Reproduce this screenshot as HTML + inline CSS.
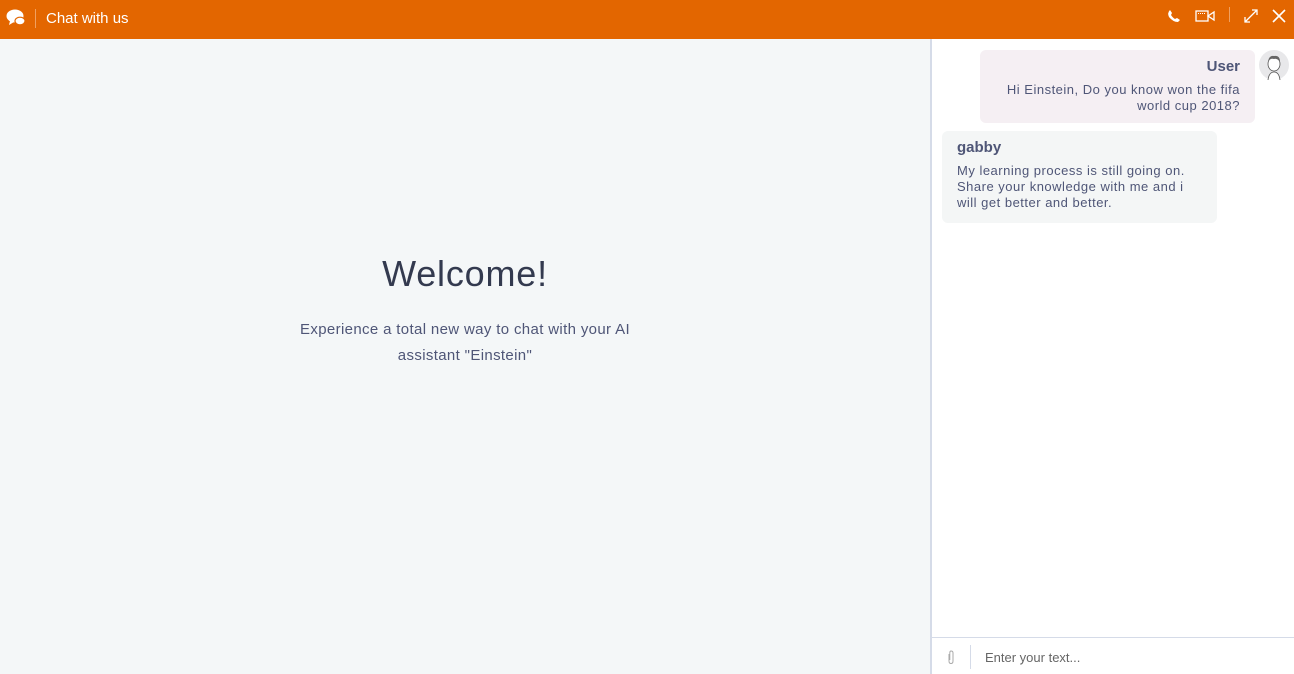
<!DOCTYPE html>
<html><head><meta charset="utf-8"><style>
*{margin:0;padding:0;box-sizing:border-box}
body{width:1294px;height:674px;overflow:hidden;font-family:"Liberation Sans",sans-serif;background:#fff;position:relative}
.top{position:absolute;left:0;top:0;width:1294px;height:39px;background:#e36600;color:#fff}
.left{position:absolute;left:0;top:39px;width:930px;height:635px;background:#f4f7f8}
.div{position:absolute;left:930px;top:39px;width:2px;height:635px;background:#d5dbe8}
.right{position:absolute;left:932px;top:39px;width:362px;height:635px;background:#fff}
.bub{position:absolute;border-radius:6px;color:#4f5677;font-size:13px;line-height:16px;letter-spacing:0.5px}
.bub b{display:block;font-size:15px;letter-spacing:0;margin-bottom:7px}
</style></head><body>
<div class="top">
<svg style="position:absolute;left:6px;top:9px" width="20" height="18" viewBox="0 0 20 18"><ellipse cx="9" cy="7" rx="8.5" ry="6.5" fill="#fff"/><path d="M4 12 L3 16 L8 13Z" fill="#fff"/><ellipse cx="14" cy="12" rx="5" ry="3.8" fill="#fff" stroke="#e36600" stroke-width="1.2"/></svg>
<div style="position:absolute;left:35px;top:9px;width:1px;height:19px;background:#f0a060"></div>
<div style="position:absolute;left:46px;top:10px;font-size:15px">Chat with us</div>
<svg style="position:absolute;left:1167px;top:9px" width="14" height="14" viewBox="0 0 14 14"><path d="M3 1 L5 4 L4 6 Q6 9 8 10 L10 9 L13 11 L11 13 Q6 13 2 8 Q0 4 3 1Z" fill="#fff"/></svg>
<svg style="position:absolute;left:1195px;top:10px" width="20" height="12" viewBox="0 0 20 12"><rect x="1" y="1" width="12" height="10" fill="none" stroke="#fff" stroke-width="1.3"/><line x1="3" y1="3.5" x2="11" y2="3.5" stroke="#fff" stroke-dasharray="1 1"/><path d="M13 6 L19 2 L19 10Z" fill="none" stroke="#fff" stroke-width="1.3"/></svg>
<div style="position:absolute;left:1229px;top:7px;width:1px;height:15px;background:#f0a060"></div>
<svg style="position:absolute;left:1244px;top:9px" width="14" height="14" viewBox="0 0 14 14"><path d="M1 13 L13 1 M8 1 H13 V6 M1 8 V13 H6" stroke="#fff" stroke-width="1.3" fill="none"/></svg>
<svg style="position:absolute;left:1272px;top:9px" width="14" height="14" viewBox="0 0 14 14"><path d="M1 1 L13 13 M13 1 L1 13" stroke="#fff" stroke-width="1.6"/></svg>
</div>
<div class="left">
<div style="position:absolute;left:0;width:930px;top:214px;text-align:center;font-size:36px;letter-spacing:0.8px;color:#333a4f">Welcome!</div>
<div style="position:absolute;left:280px;width:370px;top:278px;text-align:center;font-size:15px;line-height:26px;letter-spacing:0.35px;color:#4f5677">Experience a total new way to chat with your AI<br>assistant "Einstein"</div>
</div>
<div class="div"></div>
<div class="right">
<div class="bub" style="left:48px;top:11px;width:275px;height:73px;background:#f5eff3;text-align:right;padding:9px 15px 0 10px">
<b>User</b>Hi Einstein, Do you know won the fifa<br>world cup 2018?</div>
<svg style="position:absolute;left:327px;top:11px" width="30" height="30" viewBox="0 0 30 30"><circle cx="15" cy="15" r="15" fill="#e8e8ea"/><ellipse cx="15" cy="14" rx="6" ry="7" fill="#fff" stroke="#555" stroke-width=".8"/><path d="M9 12 Q10 5 15 6 Q21 5 21 12 Q18 8 15 9 Q11 8 9 12Z" fill="#666"/><path d="M9 30 Q10 22 15 22 Q20 22 21 30" fill="#fff" stroke="#555" stroke-width=".8"/></svg>
<div class="bub" style="left:10px;top:92px;width:275px;height:92px;background:#f4f6f6;padding:9px 15px 0 15px">
<b>gabby</b>My learning process is still going on.<br>Share your knowledge with me and i<br>will get better and better.</div>
<div style="position:absolute;left:0;top:598px;width:362px;height:1px;background:#d5dbe8"></div>
<svg style="position:absolute;left:15px;top:611px" width="8" height="15" viewBox="0 0 8 15"><path d="M2 4 V11 Q2 13.5 4 13.5 Q6 13.5 6 11 V3 Q6 1 4 1 Q2.8 1 2.8 3 V10" fill="none" stroke="#aaa" stroke-width="1"/></svg>
<div style="position:absolute;left:38px;top:606px;width:1px;height:24px;background:#d5dbe8"></div>
<div style="position:absolute;left:53px;top:611px;font-size:13px;color:#666">Enter your text...</div>
</div>
</body></html>
